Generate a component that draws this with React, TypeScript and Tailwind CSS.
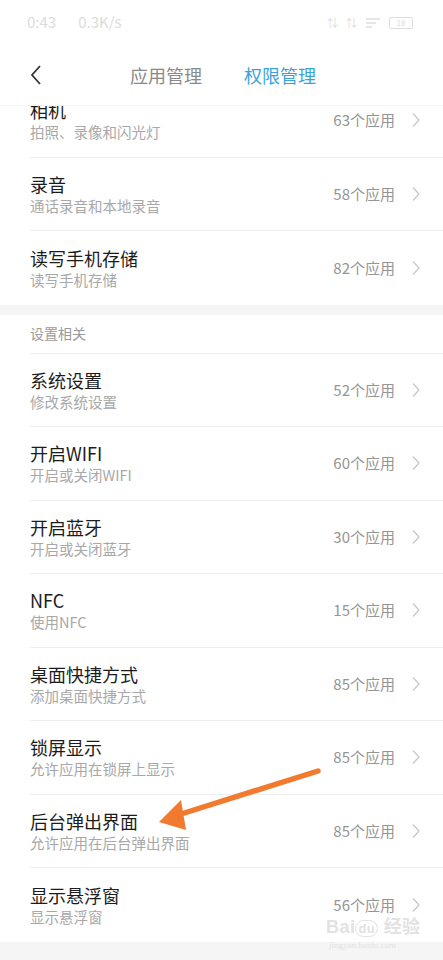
import React from 'react';

type Item = { title: string; sub: string; count: number };

const storage: Item[] = [
  { title: '相机', sub: '拍照、录像和闪光灯', count: 63 },
  { title: '录音', sub: '通话录音和本地录音', count: 58 },
  { title: '读写手机存储', sub: '读写手机存储', count: 82 },
];

const settings: Item[] = [
  { title: '系统设置', sub: '修改系统设置', count: 52 },
  { title: '开启WIFI', sub: '开启或关闭WIFI', count: 60 },
  { title: '开启蓝牙', sub: '开启或关闭蓝牙', count: 30 },
  { title: 'NFC', sub: '使用NFC', count: 15 },
  { title: '桌面快捷方式', sub: '添加桌面快捷方式', count: 85 },
  { title: '锁屏显示', sub: '允许应用在锁屏上显示', count: 85 },
  { title: '后台弹出界面', sub: '允许应用在后台弹出界面', count: 85 },
  { title: '显示悬浮窗', sub: '显示悬浮窗', count: 56 },
];

const Chevron = () => (
  <svg width="10" height="16" viewBox="0 0 10 16" className="ml-[16px] mr-[22px]">
    <path d="M2 1.5 L8 8 L2 14.5" fill="none" stroke="#c8c8c8" strokeWidth="1.3" />
  </svg>
);

const Row = ({ item, last }: { item: Item; last?: boolean }) => (
  <div className="pl-[30px]">
    <div className={`flex items-center h-[73.5px] ${last ? '' : 'border-b border-[#eeeeee]'}`}>
      <div className="flex-1 flex flex-col">
        <span className="text-[18px] leading-[24px] text-[#1c1c1c]">{item.title}</span>
        <span className="text-[14.5px] leading-[20px] text-[#a8a8a8]">{item.sub}</span>
      </div>
      <span className="text-[15px] text-[#959595]">{item.count}个应用</span>
      <Chevron />
    </div>
  </div>
);

export default function App() {
  return (
    <div
      className="w-[443px] h-[960px] bg-white overflow-hidden relative flex flex-col"
      style={{ fontFamily: '"Noto Sans CJK SC", "Noto Sans", sans-serif' }}
    >
      {/* status bar */}
      <div className="h-[45px] flex items-center px-[27px] text-[15px] text-[#dcdcdc] shrink-0">
        <span>0:43</span>
        <span className="ml-[22px]">0.3K/s</span>
        <div className="ml-auto flex items-center gap-[8px] mr-[3px]">
          <span className="text-[11px]">⇅</span>
          <span className="text-[11px]">⇅</span>
          <svg width="16" height="12" viewBox="0 0 16 12">
            <path d="M1 2h14M1 6h10M1 10h6" stroke="#dedede" strokeWidth="1.5" />
          </svg>
          <div className="w-[24px] h-[12px] border border-[#dedede] rounded-[2px] text-[8px] leading-[10px] text-center">18</div>
        </div>
      </div>

      {/* nav */}
      <div className="h-[60px] flex items-center shrink-0 relative">
        <svg width="14" height="22" viewBox="0 0 14 22" className="ml-[29px]">
          <path d="M11 2 L3 11 L11 20" fill="none" stroke="#333" strokeWidth="1.8" />
        </svg>
        <div className="flex items-center ml-[87px] gap-[42px] text-[18px]">
          <span className="text-[#8a8a8a]">应用管理</span>
          <span className="text-[#3ba3da]">权限管理</span>
        </div>
      </div>

      {/* list */}
      <div className="flex-1 overflow-hidden border-t border-[#f2f2f2]">
        <div className="-mt-[22px]">
          {storage.map((it, i) => (
            <Row key={it.title} item={it} last={i === storage.length - 1} />
          ))}
          <div className="h-[10px] bg-[#f5f5f5]" />
          <div className="pl-[30px]">
            <div className="h-[39px] flex items-center border-b border-[#eeeeee] text-[14px] text-[#9a9a9a]">
              设置相关
            </div>
          </div>
          {settings.map((it, i) => (
            <Row key={it.title} item={it} last={i === settings.length - 1} />
          ))}
          <div className="h-[40px] bg-[#f5f5f5]" />
        </div>
      </div>

      {/* orange arrow annotation */}
      <svg className="absolute left-0 top-0 pointer-events-none" width="443" height="960" viewBox="0 0 443 960">
        <path d="M318 771 L178 815" stroke="#f27a2f" strokeWidth="5.5" strokeLinecap="round" />
        <path d="M159 822 L181 800 L186 830 Z" fill="#f27a2f" />
      </svg>

      {/* watermark */}
      <div className="absolute left-[326px] top-[915px] flex flex-col items-start text-[#e2e2e2] pointer-events-none">
        <span className="text-[18px] leading-[20px] font-bold tracking-wide" style={{ fontFamily: '"Liberation Sans", sans-serif' }}>
          Bai<span className="border border-[#e2e2e2] rounded-full px-[2px] text-[13px]">du</span> <span style={{ fontFamily: '"Noto Sans CJK SC", sans-serif' }}>经验</span>
        </span>
        <span className="text-[9px] leading-[12px] ml-[3px]" style={{ fontFamily: '"Liberation Serif", serif' }}>jingyan.baidu.com</span>
      </div>
    </div>
  );
}
